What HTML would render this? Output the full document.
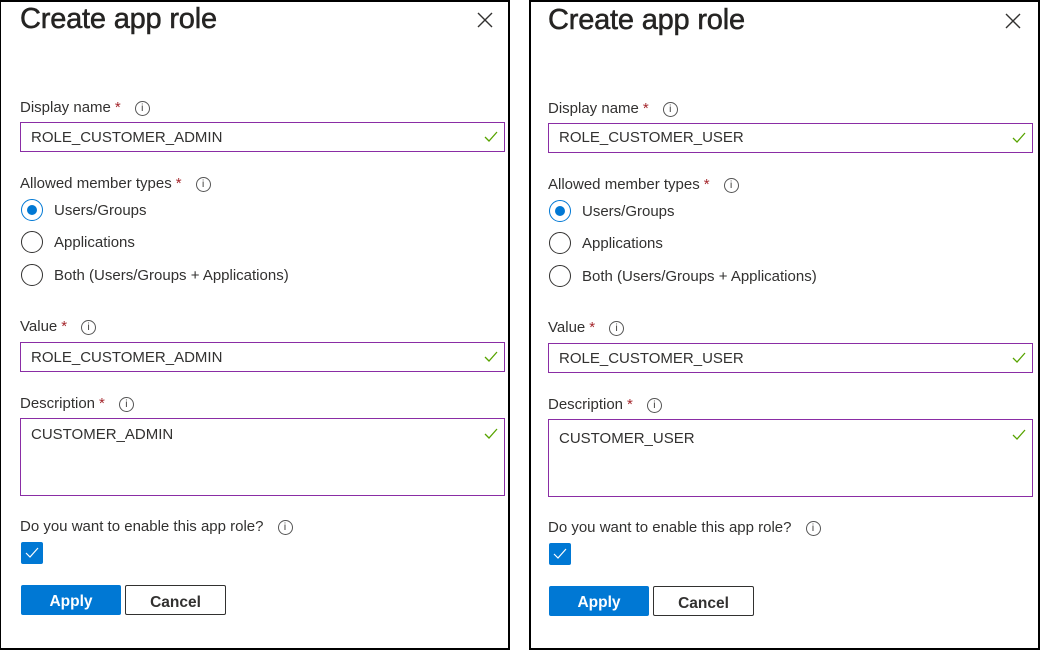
<!DOCTYPE html>
<html><head><style>
*{margin:0;padding:0;box-sizing:border-box}
body{width:1040px;height:650px;background:#fff;position:relative;overflow:hidden;font-family:"Liberation Sans",sans-serif;color:#323130}
.p{position:absolute;top:0;width:511px;height:650px;border:2px solid #000;background:#fff}
.a{position:absolute}
.t{font-size:29px;font-weight:normal;letter-spacing:-0.2px;color:#252423;-webkit-text-stroke:0.5px #252423}
.l{font-size:15px;color:#323130;line-height:18px}
.s{color:#a4262c;margin-left:4px}
.i{display:inline-block;width:15px;height:15px;border:1px solid #555;border-radius:50%;font-size:10px;text-align:center;line-height:13px;margin-left:14px;vertical-align:1px}
.in{border:1px solid #8a2da5;font-size:15px;padding-left:10px;color:#323130}
.ck{position:absolute;right:6px;width:14px;height:14px}
.r{width:22px;height:22px;border:1px solid #323130;border-radius:50%}
.rs{border-color:#0078d4}
.rs:after{content:"";position:absolute;left:5px;top:5px;width:10px;height:10px;border-radius:50%;background:#0078d4}
.btn{height:30px;font-size:15.5px;font-weight:bold;text-align:center;line-height:29px;border-radius:2px;padding-top:2px}
</style></head><body>
<div class="p" style="left:-1px"></div>
<div class="p" style="left:529px"></div>
<div class="a" style="left:0;top:0">
 <div class="a t" style="left:20px;top:3px;white-space:nowrap">Create app role</div>
 <svg class="a" style="left:477px;top:12px" width="16" height="16"><path d="M1 1L15 15M15 1L1 15" stroke="#323130" stroke-width="1.4"/></svg>
 <div class="a l" style="left:20px;top:99px;white-space:nowrap">Display name<span class="s">*</span><span class="i">i</span></div>
 <div class="a in" style="left:20px;top:122px;width:485px;height:30px;line-height:29px">ROLE_CUSTOMER_ADMIN<svg class="ck" style="top:7px" viewBox="0 0 14 14"><path d="M1 7l4 4 8-9" stroke="#57a300" fill="none" stroke-width="1.3"/></svg></div>
 <div class="a l" style="left:20px;top:175px;white-space:nowrap">Allowed member types<span class="s">*</span><span class="i">i</span></div>
 <div class="a r rs" style="left:21px;top:199px"></div><div class="a l" style="left:54px;top:202px">Users/Groups</div>
 <div class="a r" style="left:21px;top:231px"></div><div class="a l" style="left:54px;top:234px">Applications</div>
 <div class="a r" style="left:21px;top:264px"></div><div class="a l" style="left:54px;top:267px;white-space:nowrap">Both (Users/Groups + Applications)</div>
 <div class="a l" style="left:20px;top:318px;white-space:nowrap">Value<span class="s">*</span><span class="i">i</span></div>
 <div class="a in" style="left:20px;top:342px;width:485px;height:30px;line-height:29px">ROLE_CUSTOMER_ADMIN<svg class="ck" style="top:7px" viewBox="0 0 14 14"><path d="M1 7l4 4 8-9" stroke="#57a300" fill="none" stroke-width="1.3"/></svg></div>
 <div class="a l" style="left:20px;top:395px;white-space:nowrap">Description<span class="s">*</span><span class="i">i</span></div>
 <div class="a in" style="left:20px;top:418px;width:485px;height:78px;padding-top:7px">CUSTOMER_ADMIN<svg class="ck" style="top:8px" viewBox="0 0 14 14"><path d="M1 7l4 4 8-9" stroke="#57a300" fill="none" stroke-width="1.3"/></svg></div>
 <div class="a l" style="left:20px;top:518px;white-space:nowrap">Do you want to enable this app role?<span class="i">i</span></div>
 <div class="a" style="left:21px;top:542px;width:22px;height:22px;background:#0078d4;border-radius:2px"><svg width="22" height="22"><path d="M5 11l4 4 8-9" stroke="#fff" fill="none" stroke-width="1.2"/></svg></div>
 <div class="a btn" style="left:21px;top:585px;width:100px;background:#0078d4;color:#fff">Apply</div>
 <div class="a btn" style="left:125px;top:585px;width:101px;border:1px solid #323130;color:#323130">Cancel</div>
</div>
<div class="a" style="left:528px;top:1px">
 <div class="a t" style="left:20px;top:3px;white-space:nowrap">Create app role</div>
 <svg class="a" style="left:477px;top:12px" width="16" height="16"><path d="M1 1L15 15M15 1L1 15" stroke="#323130" stroke-width="1.4"/></svg>
 <div class="a l" style="left:20px;top:99px;white-space:nowrap">Display name<span class="s">*</span><span class="i">i</span></div>
 <div class="a in" style="left:20px;top:122px;width:485px;height:30px;line-height:27px">ROLE_CUSTOMER_USER<svg class="ck" style="top:7px" viewBox="0 0 14 14"><path d="M1 7l4 4 8-9" stroke="#57a300" fill="none" stroke-width="1.3"/></svg></div>
 <div class="a l" style="left:20px;top:175px;white-space:nowrap">Allowed member types<span class="s">*</span><span class="i">i</span></div>
 <div class="a r rs" style="left:21px;top:199px"></div><div class="a l" style="left:54px;top:202px">Users/Groups</div>
 <div class="a r" style="left:21px;top:231px"></div><div class="a l" style="left:54px;top:234px">Applications</div>
 <div class="a r" style="left:21px;top:264px"></div><div class="a l" style="left:54px;top:267px;white-space:nowrap">Both (Users/Groups + Applications)</div>
 <div class="a l" style="left:20px;top:318px;white-space:nowrap">Value<span class="s">*</span><span class="i">i</span></div>
 <div class="a in" style="left:20px;top:342px;width:485px;height:30px;line-height:29px">ROLE_CUSTOMER_USER<svg class="ck" style="top:7px" viewBox="0 0 14 14"><path d="M1 7l4 4 8-9" stroke="#57a300" fill="none" stroke-width="1.3"/></svg></div>
 <div class="a l" style="left:20px;top:395px;white-space:nowrap">Description<span class="s">*</span><span class="i">i</span></div>
 <div class="a in" style="left:20px;top:418px;width:485px;height:78px;padding-top:10px">CUSTOMER_USER<svg class="ck" style="top:8px" viewBox="0 0 14 14"><path d="M1 7l4 4 8-9" stroke="#57a300" fill="none" stroke-width="1.3"/></svg></div>
 <div class="a l" style="left:20px;top:518px;white-space:nowrap">Do you want to enable this app role?<span class="i">i</span></div>
 <div class="a" style="left:21px;top:542px;width:22px;height:22px;background:#0078d4;border-radius:2px"><svg width="22" height="22"><path d="M5 11l4 4 8-9" stroke="#fff" fill="none" stroke-width="1.2"/></svg></div>
 <div class="a btn" style="left:21px;top:585px;width:100px;background:#0078d4;color:#fff">Apply</div>
 <div class="a btn" style="left:125px;top:585px;width:101px;border:1px solid #323130;color:#323130">Cancel</div>
</div>
</body></html>
